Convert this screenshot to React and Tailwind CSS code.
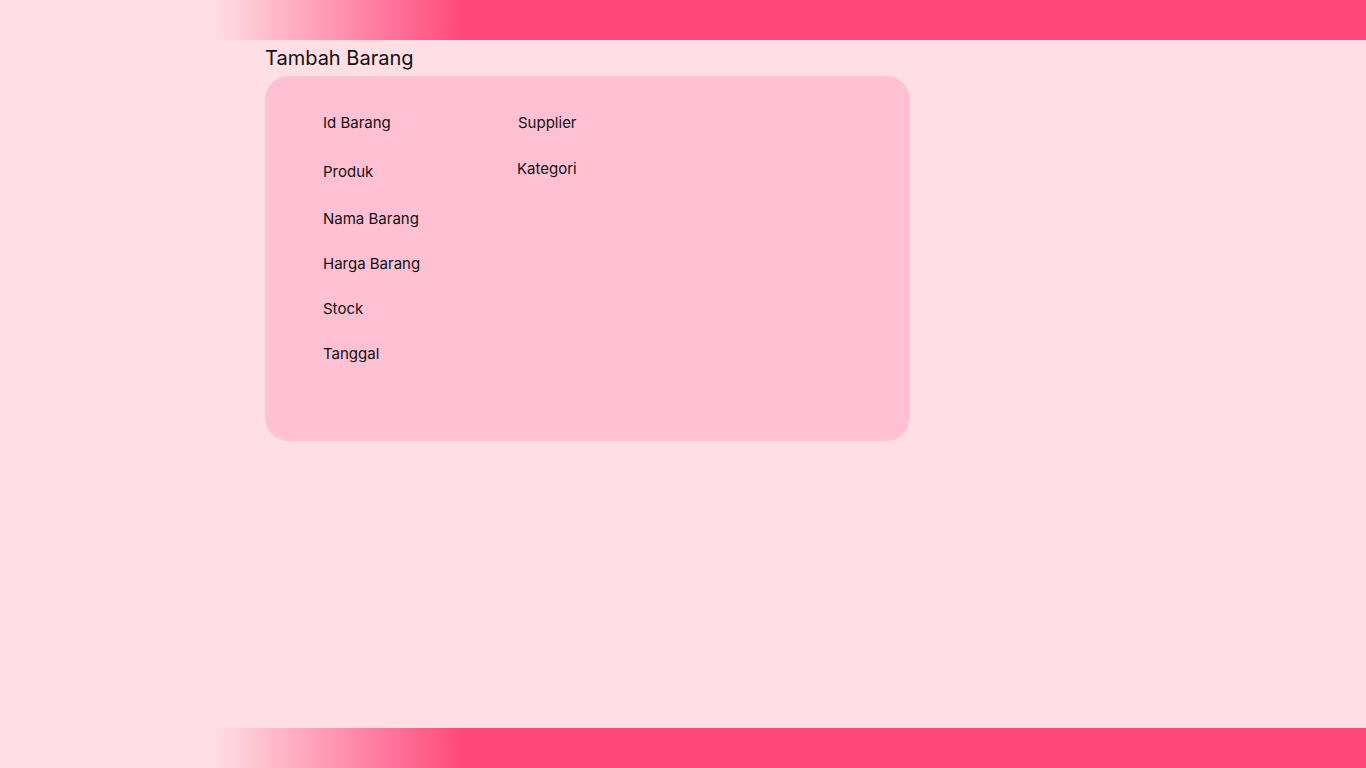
import React from 'react';

const bar = 'h-[40px] w-full bg-[linear-gradient(90deg,#ffdee5_213px,#ff467a_465px,#ff467a_100%)]';

export default function App() {
  return (
    <div className="flex h-[768px] w-[1366px] flex-col bg-[#ffdee5] font-['Inter',sans-serif] text-[#111]">
      {/* top bar */}
      <div className={bar} />

      <main className="flex-1 pl-[265px]">
        <h1 className="mt-[4px] mb-[4px] text-[20px] leading-[28px]">Tambah Barang</h1>

        <div className="flex h-[365px] w-[645px] rounded-[24px] bg-[#ffc0d3] pl-[58px] pt-[37px] text-[15px] leading-[20px]">
          <div className="flex w-[195px] flex-col">
            <span>Id Barang</span>
            <span className="mt-[29px]">Produk</span>
            <span className="mt-[27px]">Nama Barang</span>
            <span className="mt-[25px]">Harga Barang</span>
            <span className="mt-[25px]">Stock</span>
            <span className="mt-[25px]">Tanggal</span>
          </div>
          <div className="flex flex-col">
            <span>Supplier</span>
            <span className="-ml-[1px] mt-[26px]">Kategori</span>
          </div>
        </div>
      </main>

      {/* bottom bar */}
      <div className={bar} />
    </div>
  );
}
